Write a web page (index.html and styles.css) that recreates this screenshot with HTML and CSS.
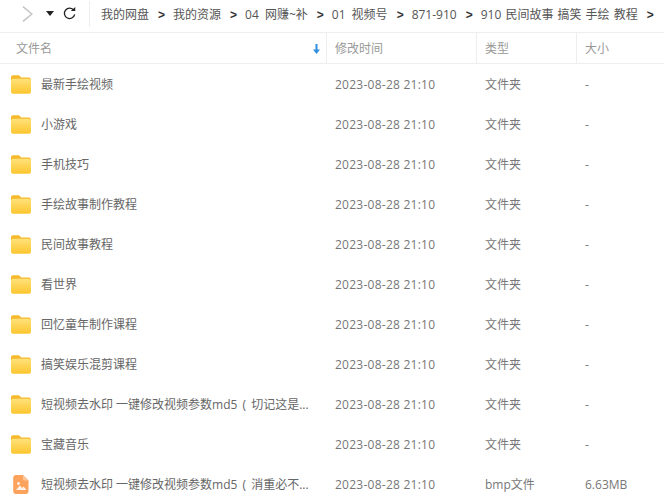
FILE: index.html
```html
<!DOCTYPE html>
<html lang="zh">
<head>
<meta charset="utf-8">
<title>文件列表</title>
<link rel="stylesheet" href="styles.css">
</head>
<body>
<svg class="defs" width="0" height="0" aria-hidden="true">
  <defs>
    <linearGradient id="fg" x1="0" y1="0" x2="0" y2="1">
      <stop offset="0" stop-color="#ffe27a"/>
      <stop offset="1" stop-color="#fdc52f"/>
    </linearGradient>
    <symbol id="folder" viewBox="0 0 20 19">
      <path d="M0 2.500C0 1.200.9.300 2.200.300h5c.8 0 1.300.3 1.800.9l1.200 1.300h7.600c1.200 0 2.200 1 2.200 2.200v2H0z" fill="#f6b92c"/>
      <rect x="0" y="3.800" width="20" height="15" rx="2" fill="url(#fg)"/>
    </symbol>
  </defs>
</svg>
<div class="toolbar">
  <div class="nav">
    <svg class="fwd" width="11" height="16" viewBox="0 0 11 16"><path d="M1 .7 9.800 8 1 15.300" fill="none" stroke="#c4c4c4" stroke-width="1.500"/></svg>
    <svg class="drop" width="8" height="5" viewBox="0 0 8 5"><path d="M0 0h8L4 5z" fill="#222"/></svg>
    <svg class="refresh" width="13" height="13" viewBox="0 0 14 14"><path d="M11.700 3.600A5.600 5.600 0 1 0 12.600 8" fill="none" stroke="#222" stroke-width="1.400"/><path d="M8.400 4.400h4.800V0z" fill="#222"/></svg>
  </div>
  <nav class="crumbs">
    <span>我的网盘</span><i>&gt;</i>
    <span>我的资源</span><i>&gt;</i>
    <span>04 网赚~补</span><i>&gt;</i>
    <span>01 视频号</span><i>&gt;</i>
    <span>871-910</span><i>&gt;</i>
    <span class="tight">910 民间故事 搞笑 手绘 教程</span><i>&gt;</i>
  </nav>
</div>
<div class="head row-grid">
  <div class="hname">文件名<svg class="sort" width="7" height="10" viewBox="0 0 7 10"><path d="M2.500 0h2v5.500H7L3.500 10 0 5.500h2.500z" fill="#2f8fe0"/></svg></div>
  <div class="hcol">修改时间</div>
  <div class="hcol">类型</div>
  <div class="hcol">大小</div>
</div>
<div class="list">
  <div class="row row-grid"><div class="name"><svg class="ico"><use href="#folder"/></svg><span>最新手绘视频</span></div><div class="date">2023-08-28 21:10</div><div>文件夹</div><div>-</div></div>
  <div class="row row-grid"><div class="name"><svg class="ico"><use href="#folder"/></svg><span>小游戏</span></div><div class="date">2023-08-28 21:10</div><div>文件夹</div><div>-</div></div>
  <div class="row row-grid"><div class="name"><svg class="ico"><use href="#folder"/></svg><span>手机技巧</span></div><div class="date">2023-08-28 21:10</div><div>文件夹</div><div>-</div></div>
  <div class="row row-grid"><div class="name"><svg class="ico"><use href="#folder"/></svg><span>手绘故事制作教程</span></div><div class="date">2023-08-28 21:10</div><div>文件夹</div><div>-</div></div>
  <div class="row row-grid"><div class="name"><svg class="ico"><use href="#folder"/></svg><span>民间故事教程</span></div><div class="date">2023-08-28 21:10</div><div>文件夹</div><div>-</div></div>
  <div class="row row-grid"><div class="name"><svg class="ico"><use href="#folder"/></svg><span>看世界</span></div><div class="date">2023-08-28 21:10</div><div>文件夹</div><div>-</div></div>
  <div class="row row-grid"><div class="name"><svg class="ico"><use href="#folder"/></svg><span>回忆童年制作课程</span></div><div class="date">2023-08-28 21:10</div><div>文件夹</div><div>-</div></div>
  <div class="row row-grid"><div class="name"><svg class="ico"><use href="#folder"/></svg><span>搞笑娱乐混剪课程</span></div><div class="date">2023-08-28 21:10</div><div>文件夹</div><div>-</div></div>
  <div class="row row-grid"><div class="name"><svg class="ico"><use href="#folder"/></svg><span>短视频去水印 一键修改视频参数md5 &#8201;( &#8201;切记这是...</span></div><div class="date">2023-08-28 21:10</div><div>文件夹</div><div>-</div></div>
  <div class="row row-grid"><div class="name"><svg class="ico"><use href="#folder"/></svg><span>宝藏音乐</span></div><div class="date">2023-08-28 21:10</div><div>文件夹</div><div>-</div></div>
  <div class="row row-grid"><div class="name"><svg class="ico" viewBox="0 0 20 19"><path d="M5 0h7l5.500 5.500V16c0 1.700-1 3-2.700 3H5c-1.700 0-2.800-1.300-2.800-3V3C2.200 1.300 3.300 0 5 0z" fill="#fba35c"/><path d="M12 0l5.500 5.500h-4c-.9 0-1.500-.6-1.500-1.500z" fill="#fdc79b"/><circle cx="7.500" cy="8.500" r="1.400" fill="#fff" opacity=".85"/><path d="M5 15 8.800 10.500l2.300 2.500 1.500-1.500 2.900 3.500z" fill="#fff" opacity=".85"/></svg><span>短视频去水印 一键修改视频参数md5 &#8201;( &#8201;消重必不...</span></div><div class="date">2023-08-28 21:10</div><div>bmp文件</div><div>6.63MB</div></div>
</div>
</body>
</html>
```
FILE: styles.css
```css
* { box-sizing: border-box; }
html, body { margin: 0; padding: 0; background: #fff; }
body {
  width: 664px;
  height: 497px;
  overflow: hidden;
  font: 12px/20px "Open Sans", "Noto Sans CJK SC", "Liberation Sans", sans-serif;
  color: #666;
}
.defs { position: absolute; }
.toolbar {
  display: flex;
  align-items: center;
  height: 33px;
  border-bottom: 1px solid #eee;
  padding-bottom: 5px;
}
.nav {
  display: flex;
  align-items: center;
  width: 90px;
  height: 26px;
  padding-left: 22px;
  border-right: 1px solid #eee;
}
.fwd { margin-right: 13px; }
.drop { margin-right: 9px; }
.crumbs {
  display: flex;
  align-items: center;
  padding: 2px 0 0 11px;
  color: #555;
  white-space: nowrap;
  word-spacing: 3px;
}
.crumbs .tight { word-spacing: 1px; }
.crumbs i {
  font-style: normal;
  font-family: "Liberation Sans", sans-serif;
  font-weight: 700;
  color: #333;
  margin: 0 8px 0 9px;
}
.row-grid {
  display: grid;
  grid-template-columns: 327px 150px 100px 87px;
}
.head {
  height: 31px;
  border-bottom: 1px solid #eee;
  color: #999;
}
.head > div {
  display: flex;
  align-items: center;
  justify-content: space-between;
  border-right: 1px solid #eee;
  padding-top: 2px;
  padding-left: 8px;
}
.head > div:last-child { border-right: 0; }
.head .hname { padding-left: 16px; padding-right: 6px; }
.row { height: 40px; align-items: center; color: #777; }
.row > div { padding-left: 8px; padding-top: 2px; }
.row > .date { letter-spacing: .25px; }
.row > .name {
  display: flex;
  align-items: center;
  padding-top: 0;
  padding-left: 11px;
  color: #666;
}
.name span { padding-top: 2px; }
.ico { width: 20px; height: 19px; margin-right: 10px; flex: none; }
```
